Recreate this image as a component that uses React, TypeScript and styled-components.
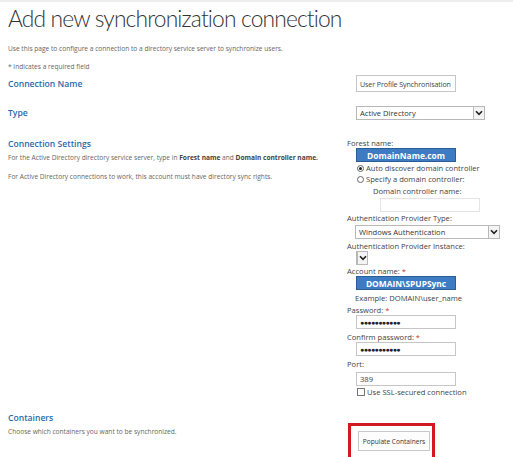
import React from 'react';
import styled, {createGlobalStyle} from 'styled-components';

const GlobalStyle = createGlobalStyle`
	html, body {
		margin: 0;
		padding: 0;
		background: #fff;
	}
	body {
		font-family: 'Open Sans', 'Liberation Sans', sans-serif;
		color: #444;
	}
`;

const Page = styled.div`
	width: 513px;
	height: 457px;
	overflow: hidden;
	box-sizing: border-box;
	border-top: 2px solid #ededed;
	padding-left: 8px;
`;

const Title = styled.h1`
	margin: 0;
	padding-top: 1px;
	height: 38px;
	font-family: Lato, 'Open Sans', sans-serif;
	font-weight: 300;
	font-size: 22.8px;
	line-height: 30px;
	letter-spacing: -0.85px;
	color: #333;
`;

const Note = styled.p<{$top?: number}>`
	margin: ${({$top}) => $top ?? 0}px 0 0;
	font-size: 6.6px;
	line-height: 10px;
	color: #666;

	b {
		color: #444;
		font-weight: 700;
	}
`;

const Section = styled.div<{$top: number; $center?: boolean}>`
	display: grid;
	grid-template-columns: 339px 1fr;
	align-items: ${({$center}) => ($center ? 'center' : 'start')};
	margin-top: ${({$top}) => $top}px;
`;

const Heading = styled.h2`
	margin: 0;
	font-size: 8.6px;
	line-height: 14px;
	font-weight: 600;
	color: #2a6aa8;
`;

const Controls = styled.div`
	display: flex;
	flex-direction: column;
	align-items: flex-start;
	font-size: 7.6px;
	color: #444;
`;

const Label = styled.div<{$top?: number; $indent?: number}>`
	margin: ${({$top}) => $top ?? 0}px 0 0 ${({$indent}) => $indent ?? 0}px;
	line-height: 10px;
	white-space: nowrap;

	span {
		color: #c0392b;
	}
`;

const Field = styled.div<{$top?: number; $indent?: number; $width?: number; $height?: number; $highlight?: boolean; $faint?: boolean}>`
	box-sizing: border-box;
	margin: ${({$top}) => $top ?? 0}px 0 0 ${({$indent}) => $indent ?? 9}px;
	width: ${({$width}) => $width ?? 100}px;
	height: ${({$height}) => $height ?? 14}px;
	padding: 0 3px;
	display: flex;
	align-items: center;
	white-space: nowrap;
	overflow: hidden;
	border: 1px solid ${({$highlight, $faint}) => ($highlight ? '#2c5d94' : $faint ? '#e4e4e4' : '#c6c6c6')};
	background: ${({$highlight}) => ($highlight ? '#3d7bc2' : '#fff')};
	color: ${({$highlight}) => ($highlight ? '#fff' : '#444')};
	font-weight: ${({$highlight}) => ($highlight ? 700 : 400)};
	font-size: ${({$highlight}) => ($highlight ? 8.4 : 7.6)}px;
	justify-content: ${({$highlight}) => ($highlight ? 'center' : 'flex-start')};
`;

const NameText = styled.span`
	font-size: 7.1px;
	letter-spacing: -0.1px;
`;

const Dots = styled.span`
	font-size: 7px;
	letter-spacing: -0.6px;
	color: #222;
`;

const Select = styled.div<{$top?: number; $width: number; $indent?: number}>`
	box-sizing: border-box;
	margin: ${({$top}) => $top ?? 0}px 0 0 ${({$indent}) => $indent ?? 9}px;
	width: ${({$width}) => $width}px;
	height: 14px;
	display: flex;
	align-items: stretch;
	border: 1px solid #b8b8b8;
	background: #fff;
	font-size: 7.6px;
	color: #333;
`;

const SelectText = styled.div`
	flex: 1;
	padding-left: 3px;
	display: flex;
	align-items: center;
	white-space: nowrap;
	overflow: hidden;
`;

const DropButton = styled.div`
	box-sizing: border-box;
	width: 11px;
	margin: 0 0 0 auto;
	border-left: 1px solid #b8b8b8;
	display: flex;
	align-items: center;
	justify-content: center;
	background: #f4f4f4;
`;

const Option = styled.div<{$top?: number}>`
	margin: ${({$top}) => $top ?? 0}px 0 0 10px;
	display: flex;
	align-items: center;
	gap: 2px;
	line-height: 10px;
	white-space: nowrap;
`;

const Radio = styled.span<{$checked?: boolean}>`
	box-sizing: border-box;
	width: 7px;
	height: 7px;
	border-radius: 50%;
	border: 1px solid #666;
	display: inline-flex;
	align-items: center;
	justify-content: center;

	&::after {
		content: '';
		width: 3px;
		height: 3px;
		border-radius: 50%;
		background: ${({$checked}) => ($checked ? '#222' : 'transparent')};
	}
`;

const Checkbox = styled.span`
	box-sizing: border-box;
	width: 8px;
	height: 8px;
	border: 1px solid #777;
	background: #fff;
`;

const Highlight = styled.div`
	box-sizing: border-box;
	margin: 12px 0 0 1px;
	width: 87px;
	height: 40px;
	padding: 5px 0 0 7px;
	border: 3px solid #d01920;
	border-bottom: none;
`;

const Button = styled.div`
	box-sizing: border-box;
	width: 72px;
	height: 20px;
	border: 1px solid #c8c8c8;
	background: #fdfdfd;
	display: flex;
	align-items: center;
	justify-content: center;
	font-size: 6.6px;
	color: #333;
	white-space: nowrap;
`;

const Chevron = () => (
	<svg width="8" height="6" viewBox="0 0 8 6">
		<path d="M1 1.2 L4 4.4 L7 1.2" fill="none" stroke="#222" strokeWidth="1.6" />
	</svg>
);

export default function App() {
	return (
		<>
			<GlobalStyle />
			<Page>
				<Title>Add new synchronization connection</Title>
				<Note $top={3}>Use this page to configure a connection to a directory service server to synchronize users.</Note>
				<Note $top={8}>* Indicates a required field</Note>

				<Section $top={3} $center>
					<Heading>Connection Name</Heading>
					<Controls>
						<Field $height={17}>
							<NameText>User Profile Synchronisation</NameText>
						</Field>
					</Controls>
				</Section>

				<Section $top={14} $center>
					<Heading>Type</Heading>
					<Controls>
						<Select $width={129}>
							<SelectText>Active Directory</SelectText>
							<DropButton>
								<Chevron />
							</DropButton>
						</Select>
					</Controls>
				</Section>

				<Section $top={17}>
					<div>
						<Heading>Connection Settings</Heading>
						<Note $top={2}>
							For the Active Directory directory service server, type in <b>Forest name</b> and <b>Domain controller name.</b>
						</Note>
						<Note $top={9}>For Active Directory connections to work, this account must have directory sync rights.</Note>
					</div>
					<Controls>
						<Label $top={1}>Forest name:</Label>
						<Field $highlight>DomainName.com</Field>
						<Option $top={1}>
							<Radio $checked />
							Auto discover domain controller
						</Option>
						<Option $top={1}>
							<Radio />
							Specify a domain controller:
						</Option>
						<Label $top={2} $indent={26}>Domain controller name:</Label>
						<Field $top={2} $indent={33} $faint />
						<Label $top={1}>Authentication Provider Type:</Label>
						<Select $top={2} $width={145} $indent={8}>
							<SelectText>Windows Authentication</SelectText>
							<DropButton>
								<Chevron />
							</DropButton>
						</Select>
						<Label $top={2}>Authentication Provider Instance:</Label>
						<Select $width={12}>
							<DropButton>
								<Chevron />
							</DropButton>
						</Select>
						<Label $top={1}>
							Account name: <span>*</span>
						</Label>
						<Field $highlight>DOMAIN\SPUPSync</Field>
						<Label $top={3} $indent={8}>Example: DOMAIN\user_name</Label>
						<Label $top={2}>
							Password: <span>*</span>
						</Label>
						<Field>
							<Dots>●●●●●●●●●●●</Dots>
						</Field>
						<Label $top={3}>
							Confirm password: <span>*</span>
						</Label>
						<Field>
							<Dots>●●●●●●●●●●●</Dots>
						</Field>
						<Label $top={3}>Port:</Label>
						<Field $top={3}>389</Field>
						<Option $top={1}>
							<Checkbox />
							Use SSL-secured connection
						</Option>
					</Controls>
				</Section>

				<Section $top={14}>
					<div>
						<Heading>Containers</Heading>
						<Note $top={2}>Choose which containers you want to be synchronized.</Note>
					</div>
					<Controls>
						<Highlight>
							<Button>Populate Containers</Button>
						</Highlight>
					</Controls>
				</Section>
			</Page>
		</>
	);
}
